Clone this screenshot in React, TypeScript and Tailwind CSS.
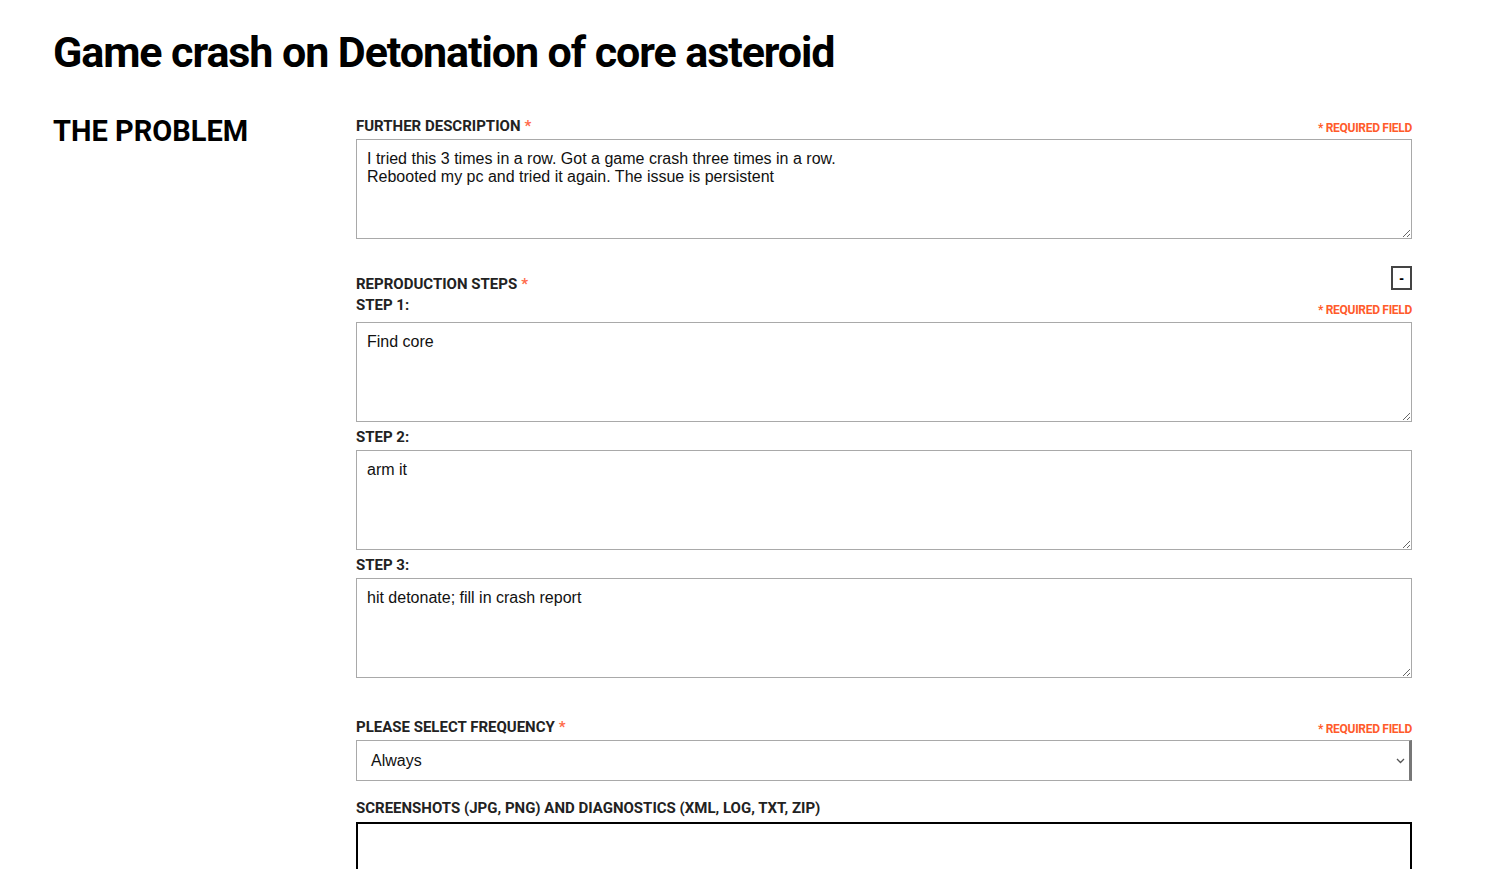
import React from "react";

const heading = { fontFamily: "Roboto, 'DejaVu Sans Condensed', sans-serif" };
const body = { fontFamily: "'Liberation Sans', Arial, sans-serif" };

const Required = () => (
  <span className="block text-[12px] leading-[14px] font-bold tracking-tight text-[#ff5b2b]" style={heading}>
    * REQUIRED FIELD
  </span>
);

const Label = ({ text, star }: { text: string; star?: boolean }) => (
  <span className="text-[15px] leading-[21px] font-bold text-[#222]" style={heading}>
    {text}
    {star && <span className="ml-1 text-[#ff6b4a]">*</span>}
  </span>
);

const Area = ({ value }: { value: string }) => (
  <textarea
    readOnly
    defaultValue={value}
    className="block w-full h-[100px] border border-[#a9a9a9] px-[10px] pt-[10px] pb-[8px] text-[16px] leading-[18px] text-[#111] outline-none resize-y"
    style={body}
  />
);

export default function App() {
  return (
    <div className="min-h-screen bg-white pl-[53px] pr-[81px] pt-[28px]">
      <h1 className="text-[43px] leading-[48px] font-bold text-black tracking-tight" style={heading}>
        Game crash on Detonation of core asteroid
      </h1>

      <div className="flex mt-[41px]">
        <div className="w-[303px] shrink-0">
          <h2 className="text-[29px] leading-[36px] font-bold text-black -mt-[4px]" style={heading}>
            THE PROBLEM
          </h2>
        </div>

        <div className="flex-1">
          <div className="flex items-end justify-between h-[22px]">
            <div className="pb-[2px]">
              <Label text="FURTHER DESCRIPTION" star />
            </div>
            <div className="pb-[4px]">
              <Required />
            </div>
          </div>
          <Area value={"I tried this 3 times in a row. Got a game crash three times in a row.\nRebooted my pc and tried it again. The issue is persistent"} />

          <div className="flex justify-between mt-[27px]">
            <div className="flex flex-col pt-[8px]">
              <Label text="REPRODUCTION STEPS" star />
              <Label text="STEP 1:" />
            </div>
            <div className="flex flex-col items-end">
              <button className="w-[21px] h-[24px] border-2 border-[#444] flex items-center justify-center text-[14px] font-bold leading-none text-black bg-white" style={body}>
                -
              </button>
              <div className="mt-[13px]">
                <Required />
              </div>
            </div>
          </div>
          <div className="mt-[5px]">
            <Area value="Find core" />
          </div>

          <div className="h-[28px] flex items-center pt-[2px]">
            <Label text="STEP 2:" />
          </div>
          <Area value="arm it" />

          <div className="h-[28px] flex items-center pt-[2px]">
            <Label text="STEP 3:" />
          </div>
          <Area value="hit detonate; fill in crash report" />

          <div className="flex items-end justify-between h-[22px] mt-[40px]">
            <div className="pb-[2px]">
              <Label text="PLEASE SELECT FREQUENCY" star />
            </div>
            <div className="pb-[4px]">
              <Required />
            </div>
          </div>
          <div className="relative h-[41px] border border-[#a9a9a9] border-r-[3px] border-r-[#777] flex items-center pl-[14px]">
            <span className="text-[16px] text-[#111]" style={body}>Always</span>
            <svg className="absolute right-[4px] top-1/2 -translate-y-1/2" width="9" height="6" viewBox="0 0 9 6">
              <path d="M1 1l3.5 3.5L8 1" stroke="#555" strokeWidth="1.3" fill="none" />
            </svg>
          </div>

          <div className="h-[41px] flex items-center pt-[14px]">
            <Label text="SCREENSHOTS (JPG, PNG) AND DIAGNOSTICS (XML, LOG, TXT, ZIP)" />
          </div>
          <div className="h-[100px] border-2 border-black" />
        </div>
      </div>
    </div>
  );
}
